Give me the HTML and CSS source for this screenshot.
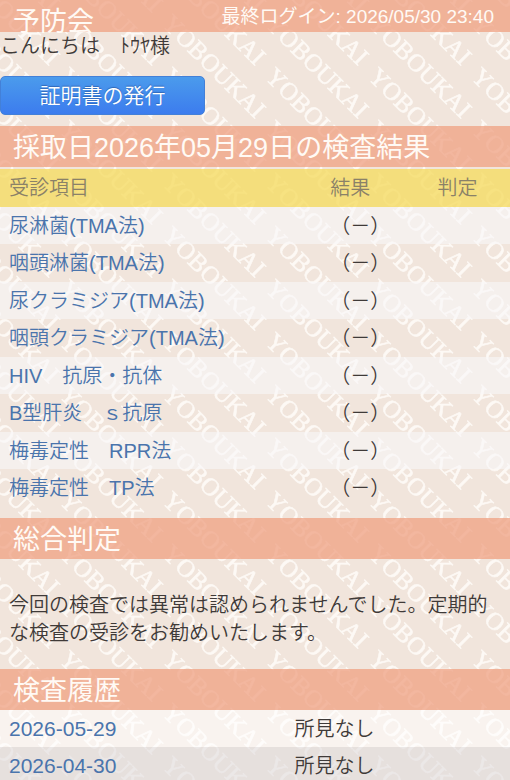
FILE: index.html
```html
<!DOCTYPE html>
<html lang="ja">
<head>
<meta charset="utf-8">
<meta name="viewport" content="width=device-width, initial-scale=1">
<title>予防会</title>
<link rel="stylesheet" href="styles.css">
</head>
<body>
<header class="site-header">
  <h1 class="site-name">予防会</h1>
  <p class="last-login">最終ログイン: 2026/05/30 23:40</p>
</header>
<main>
  <p class="greeting">こんにちは　ﾄｳﾔ様</p>
  <button class="issue-button" type="button">証明書の発行</button>

  <section>
    <h2 class="bar">採取日2026年05月29日の検査結果</h2>
    <table class="results">
      <colgroup><col class="col-item"><col class="col-result"><col></colgroup>
      <thead>
        <tr><th scope="col">受診項目</th><th scope="col">結果</th><th scope="col">判定</th></tr>
      </thead>
      <tbody>
        <tr><td><a href="#">尿淋菌(TMA法)</a></td><td>（－）</td><td></td></tr>
        <tr><td><a href="#">咽頭淋菌(TMA法)</a></td><td>（－）</td><td></td></tr>
        <tr><td><a href="#">尿クラミジア(TMA法)</a></td><td>（－）</td><td></td></tr>
        <tr><td><a href="#">咽頭クラミジア(TMA法)</a></td><td>（－）</td><td></td></tr>
        <tr><td><a href="#">HIV　抗原・抗体</a></td><td>（－）</td><td></td></tr>
        <tr><td><a href="#">B型肝炎　ｓ抗原</a></td><td>（－）</td><td></td></tr>
        <tr><td><a href="#">梅毒定性　RPR法</a></td><td>（－）</td><td></td></tr>
        <tr><td><a href="#">梅毒定性　TP法</a></td><td>（－）</td><td></td></tr>
      </tbody>
    </table>
  </section>

  <section>
    <h2 class="bar">総合判定</h2>
    <p class="summary">今回の検査では異常は認められませんでした。定期的な検査の受診をお勧めいたします。</p>
  </section>

  <section>
    <h2 class="bar">検査履歴</h2>
    <table class="history">
      <colgroup><col class="col-date"><col></colgroup>
      <tbody>
        <tr><td><a href="#">2026-05-29</a></td><td>所見なし</td></tr>
        <tr><td><a href="#">2026-04-30</a></td><td>所見なし</td></tr>
      </tbody>
    </table>
  </section>
</main>
</body>
</html>
```
FILE: styles.css
```css
* { box-sizing: border-box; }

html { scrollbar-width: none; }

body {
  margin: 0;
  color: #3f3a38;
  font: 350 20px/28px "Liberation Sans", "Noto Sans CJK JP", sans-serif;
  background-color: #f1e5dc;
  /* Diagonal watermark: one tile repeated, with the neighbours' overhang drawn in */
  background-image: url("data:image/svg+xml,%3Csvg xmlns='http://www.w3.org/2000/svg' xmlns:xlink='http://www.w3.org/1999/xlink' width='103' height='53'%3E%3Cdefs%3E%3Ctext id='t' transform='rotate(45)' font-family='Liberation Serif' font-size='25' fill='%23fdf9f5' stroke='%23fdf9f5' stroke-width='.5'%3EYOBOUKAI%3C/text%3E%3C/defs%3E%3Cuse xlink:href='%23t' x='-3' y='-93'/%3E%3Cuse xlink:href='%23t' x='-3' y='-40'/%3E%3Cuse xlink:href='%23t' x='-3' y='13'/%3E%3Cuse xlink:href='%23t' x='-3' y='66'/%3E%3Cuse xlink:href='%23t' x='100' y='-40'/%3E%3Cuse xlink:href='%23t' x='100' y='13'/%3E%3Cuse xlink:href='%23t' x='100' y='66'/%3E%3Cuse xlink:href='%23t' x='-106' y='-93'/%3E%3Cuse xlink:href='%23t' x='-106' y='-40'/%3E%3C/svg%3E");
  background-position: 61px 12px;
}

h1, h2, p { margin: 0; font-weight: 400; }

a { color: #4a74ac; text-decoration: none; }

.site-header {
  display: flex;
  justify-content: space-between;
  align-items: flex-start;
  height: 32px;
  padding: 0 16px 0 13px;
  color: #fffaf5;
  background: rgba(239, 160, 130, 0.75);
}

.site-name { font-size: 27px; line-height: 44px; }

.last-login { font-size: 19px; line-height: 34px; }

.greeting { height: 44px; font-weight: 350; }

.issue-button {
  display: block;
  width: 205px;
  height: 39px;
  margin-bottom: 11px;
  padding: 0;
  border: 1px solid #4380d8;
  border-radius: 5px;
  color: #fff;
  font: inherit;
  font-size: 21px;
  text-shadow: 0 -1px 1px #3068b8;
  background: linear-gradient(#4b9bec, #3c7cee);
}

.bar {
  height: 41px;
  padding: 0 13px;
  color: #fffaf5;
  font-size: 27px;
  line-height: 44px;
  background: rgba(239, 160, 130, 0.75);
}

table {
  width: 100%;
  border-collapse: collapse;
  table-layout: fixed;
}

.results { margin: 2px 0 11px; }

.col-item { width: 63%; }
.col-result { width: 21%; }
.col-date { width: 56%; }

th, td {
  height: 37px;
  padding: 0 9px;
  text-align: left;
  font-weight: 350;
  white-space: nowrap;
}

th {
  height: 38px;
  color: #8a8168;
  background: rgba(245, 220, 100, 0.8);
}

tr:nth-child(even) td { height: 38px; }

.results tr:nth-child(odd) td { background: rgba(248, 246, 249, 0.6); }

.summary { padding: 32px 9px 22px; font-weight: 350; }

.history a { font-size: 21px; }

.history tr:nth-child(odd) td { background: rgba(255, 255, 255, 0.55); }
.history tr:nth-child(even) td { background: rgba(224, 220, 222, 0.6); }
```
